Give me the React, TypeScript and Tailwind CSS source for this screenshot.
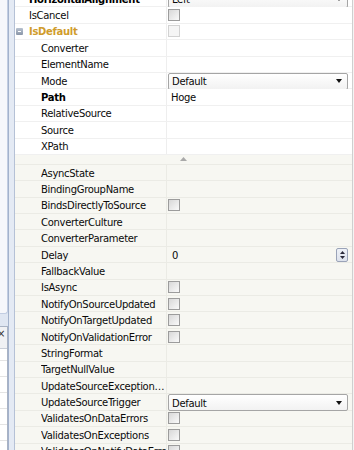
import React from 'react';

type Val =
  | { t: 'none' }
  | { t: 'check'; disabled?: boolean }
  | { t: 'combo'; text: string }
  | { t: 'text'; text: string }
  | { t: 'spin'; text: string };

type Row = {
  name: string;
  indent: 0 | 1;
  bold?: boolean;
  accent?: boolean;
  expander?: boolean;
  v?: Val;
};

const upper: Row[] = [
  { name: 'HorizontalAlignment', indent: 0, bold: true, v: { t: 'combo', text: 'Left' } },
  { name: 'IsCancel', indent: 0, v: { t: 'check' } },
  { name: 'IsDefault', indent: 0, accent: true, expander: true, v: { t: 'check', disabled: true } },
  { name: 'Converter', indent: 1 },
  { name: 'ElementName', indent: 1 },
  { name: 'Mode', indent: 1, v: { t: 'combo', text: 'Default' } },
  { name: 'Path', indent: 1, bold: true, v: { t: 'text', text: 'Hoge' } },
  { name: 'RelativeSource', indent: 1 },
  { name: 'Source', indent: 1 },
  { name: 'XPath', indent: 1 },
];

const lower: Row[] = [
  { name: 'AsyncState', indent: 1 },
  { name: 'BindingGroupName', indent: 1 },
  { name: 'BindsDirectlyToSource', indent: 1, v: { t: 'check' } },
  { name: 'ConverterCulture', indent: 1 },
  { name: 'ConverterParameter', indent: 1 },
  { name: 'Delay', indent: 1, v: { t: 'spin', text: '0' } },
  { name: 'FallbackValue', indent: 1 },
  { name: 'IsAsync', indent: 1, v: { t: 'check' } },
  { name: 'NotifyOnSourceUpdated', indent: 1, v: { t: 'check' } },
  { name: 'NotifyOnTargetUpdated', indent: 1, v: { t: 'check' } },
  { name: 'NotifyOnValidationError', indent: 1, v: { t: 'check' } },
  { name: 'StringFormat', indent: 1 },
  { name: 'TargetNullValue', indent: 1 },
  { name: 'UpdateSourceException…', indent: 1 },
  { name: 'UpdateSourceTrigger', indent: 1, v: { t: 'combo', text: 'Default' } },
  { name: 'ValidatesOnDataErrors', indent: 1, v: { t: 'check' } },
  { name: 'ValidatesOnExceptions', indent: 1, v: { t: 'check' } },
  { name: 'ValidatesOnNotifyDataErrors', indent: 1, v: { t: 'check' } },
];

function Check({ disabled }: { disabled?: boolean }) {
  return (
    <div
      className={
        disabled
          ? 'ml-[1px] w-[12px] h-[12px] border border-[#d2d2d2] bg-[#f5f5f5]'
          : 'ml-[1px] w-[12px] h-[12px] border border-[#9c9c9c] bg-linear-to-br from-[#d8d8d8] to-[#fafafa]'
      }
    />
  );
}

function Combo({ text }: { text: string }) {
  return (
    <div className="ml-[1px] mr-[4px] h-[17px] mt-[1px] flex-1 flex items-center justify-between border border-[#a5a5a5] rounded-[2px] bg-linear-to-b from-white to-[#f2f2f2] pl-[3px] pr-[5px]">
      <span className="pt-[2px]">{text}</span>
      <svg width="6" height="4" viewBox="0 0 6 4">
        <path d="M0 0h6L3 4z" fill="#111111" />
      </svg>
    </div>
  );
}

function Spin({ text }: { text: string }) {
  return (
    <div className="flex-1 flex items-center justify-between pl-[5px] pr-[4px]">
      <span className="pt-[2px]">{text}</span>
      <div className="w-[12px] h-[14px] rounded-[2px] border border-[#9aa3b8] bg-linear-to-b from-[#eef1f7] to-[#dde2ec] flex flex-col items-center justify-between py-[2px]">
        <svg width="5" height="3" viewBox="0 0 5 3">
          <path d="M0 3h5L2.5 0z" fill="#2a2a3a" />
        </svg>
        <svg width="5" height="3" viewBox="0 0 5 3">
          <path d="M0 0h5L2.5 3z" fill="#2a2a3a" />
        </svg>
      </div>
    </div>
  );
}

function Value({ v }: { v?: Val }) {
  if (!v || v.t === 'none') return null;
  if (v.t === 'check') return <Check disabled={v.disabled} />;
  if (v.t === 'combo') return <Combo text={v.text} />;
  if (v.t === 'text') return <span className="pl-[4px] pt-[2px]">{v.text}</span>;
  return <Spin text={v.text} />;
}

function PropRow({ r, beige }: { r: Row; beige?: boolean }) {
  return (
    <div
      className={
        beige
          ? 'flex h-[16.4px] shrink-0 border-b border-[#ebebe5] bg-[#f7f7f2]'
          : 'flex h-[16.4px] shrink-0 border-b border-[#f0f0f0] bg-white'
      }
    >
      <div className="w-[151px] shrink-0 flex items-center min-w-0">
        <div className="w-[14px] shrink-0 flex items-center">
          {r.expander && (
            <div className="ml-[1px] w-[7px] h-[7px] rounded-[1px] bg-linear-to-b from-[#b8c2d0] to-[#8a96a8] flex items-center justify-center">
              <div className="w-[3px] h-[1px] bg-white" />
            </div>
          )}
        </div>
        {r.indent === 1 && <div className="w-[12px] shrink-0" />}
        <span
          className={
            'whitespace-nowrap overflow-hidden pr-[1px] pt-[2px] ' +
            (r.accent
              ? 'font-bold text-[#d09c2c]'
              : r.bold
              ? 'font-bold text-black'
              : 'text-[#0a0a0a]')
          }
        >
          {r.name}
        </span>
      </div>
      <div className={beige ? 'w-px shrink-0 bg-[#ebebe5]' : 'w-px shrink-0 bg-[#eeeeee]'} />
      <div className="flex-1 flex items-center min-w-0 text-[#0a0a0a]">
        <Value v={r.v} />
      </div>
    </div>
  );
}

export default function App() {
  return (
    <div className="w-[354px] h-[450px] overflow-hidden flex bg-[#dfe6f2] font-['DejaVu_Sans',sans-serif] text-[10px] tracking-[-0.3px] leading-none">
      {/* left docked panels */}
      <div className="w-[8px] shrink-0 flex flex-col">
        <div className="h-[314px] shrink-0 bg-[#f6f7fb] border-r border-b border-[#c2cde2] rounded-br-[3px]" />
        <div className="h-[12px] shrink-0" />
        <div className="flex-1 flex flex-col bg-white border-t border-r border-[#a9b3c4] overflow-hidden">
          <div className="h-[22px] shrink-0 bg-[#f0f1f4] border-b border-[#c9ced8] relative">
            <span className="absolute -left-[3px] top-[2px] text-[10px] text-[#333]">×</span>
          </div>
          <div className="h-[12px] shrink-0 border-b border-[#e4e4e4]" />
          <div className="h-[16px] shrink-0 border-b border-[#e4e4e4]" />
          <div className="h-[16px] shrink-0 border-b border-[#e4e4e4]" />
          <div className="h-[16px] shrink-0 border-b border-[#e4e4e4]" />
          <div className="h-[16px] shrink-0 border-b border-[#e4e4e4]" />
          <div className="h-[16px] shrink-0 border-b border-[#e4e4e4]" />
        </div>
      </div>
      {/* splitter */}
      <div className="w-[7px] shrink-0 border-l border-r border-l-[#a3b2cc] border-r-[#b5c1d6] bg-[#e4eaf4]" />
      {/* property grid */}
      <div className="flex-1 min-w-0 flex flex-col overflow-hidden bg-white border-r border-[#cfcfcf]">
        <div className="-mt-[9px] flex flex-col">
          {upper.map((r) => (
            <PropRow key={r.name} r={r} />
          ))}
          <div className="h-[10px] shrink-0 flex items-center border-b border-[#ebebe5] bg-[#f7f7f2]">
            <div className="w-[165px] shrink-0" />
            <svg width="7" height="4" viewBox="0 0 7 4">
              <path d="M0 4h7L3.5 0z" fill="#a9a9a9" />
            </svg>
          </div>
          {lower.map((r) => (
            <PropRow key={r.name} r={r} beige />
          ))}
        </div>
      </div>
      <div className="w-px shrink-0 bg-[#f4f4f4]" />
    </div>
  );
}
